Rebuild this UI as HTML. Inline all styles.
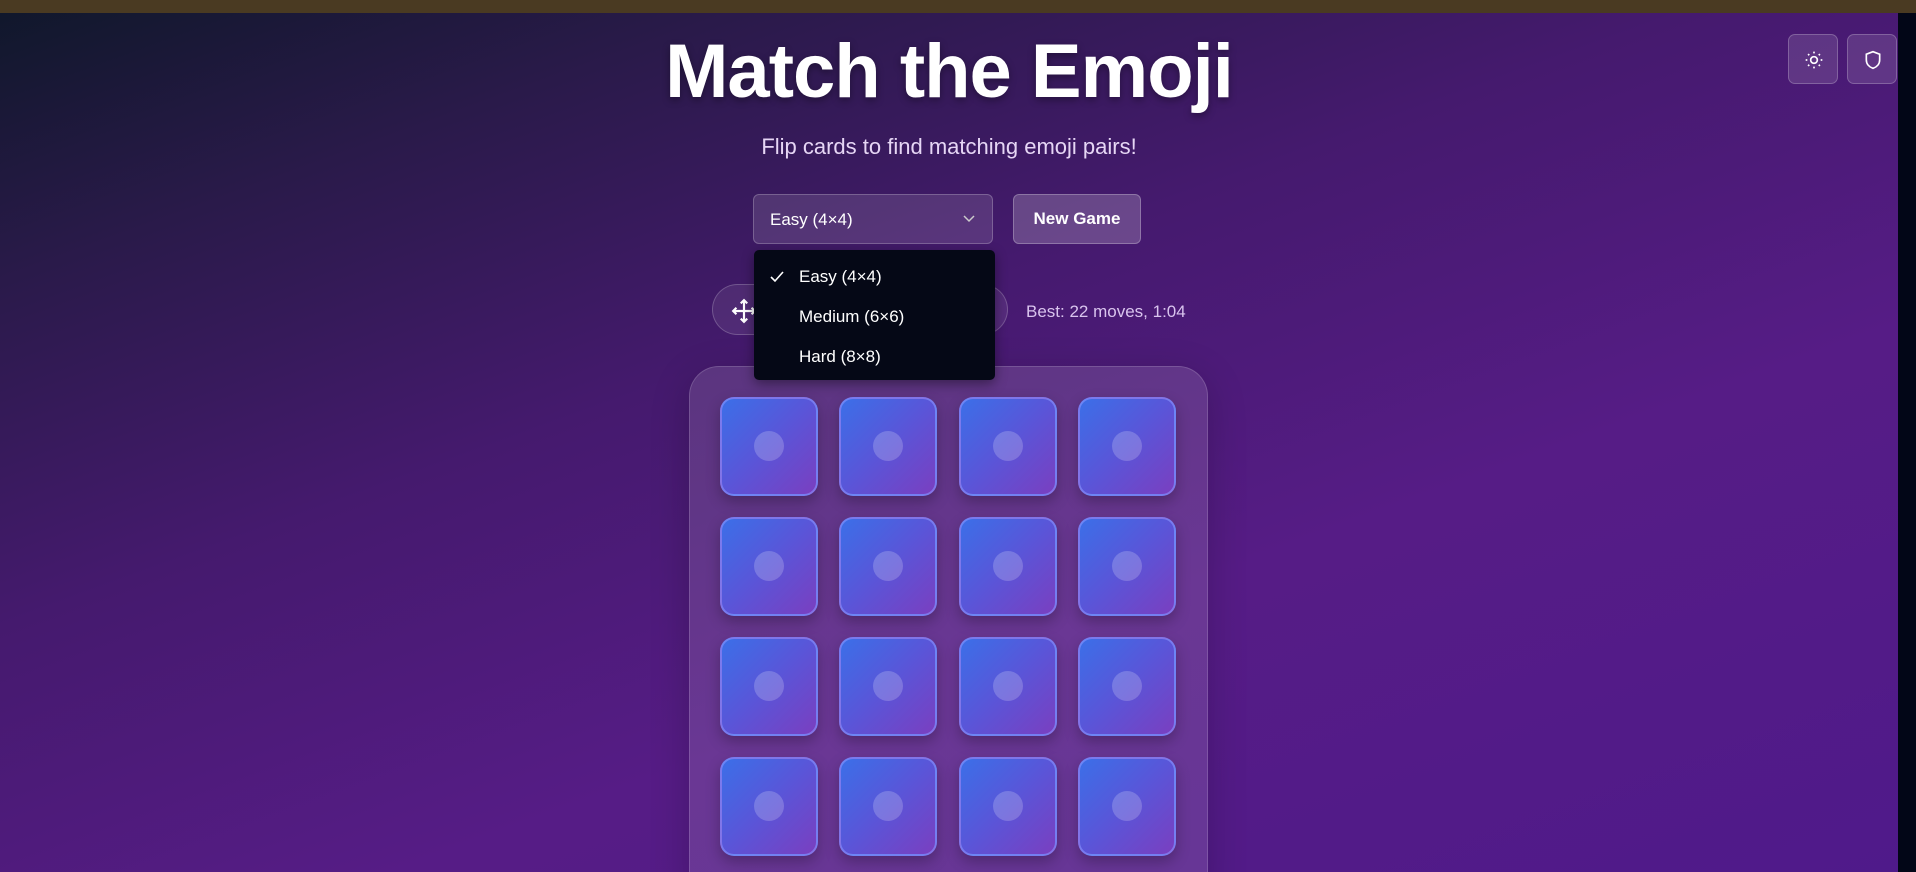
<!DOCTYPE html>
<html><head><meta charset="utf-8"><style>
*{box-sizing:border-box;margin:0;padding:0}
html,body{width:1916px;height:872px;overflow:hidden}
body{position:relative;font-family:"Liberation Sans",sans-serif;
background:linear-gradient(160deg,#0f172a 0%,#2a1a4a 18%,#451a6e 40%,#561c86 65%,#4f1a8a 100%);}
.top{position:absolute;left:0;top:0;width:1916px;height:13px;background:#4a3a22}
.strip{position:absolute;right:0;top:13px;width:18px;height:859px;background:#020617}
h1{position:absolute;left:0;width:1898px;top:28px;text-align:center;color:#fff;font-size:76px;font-weight:bold;letter-spacing:-1px;text-shadow:0 3px 8px rgba(0,0,0,.35)}
.sub{position:absolute;left:0;width:1898px;top:134px;text-align:center;color:#e6d6f5;font-size:22px}
.sel{position:absolute;left:753px;top:194px;width:240px;height:50px;border:1px solid rgba(255,255,255,.22);border-radius:6px;background:rgba(255,255,255,.12);color:#fff;font-size:17px;padding:15px 0 0 16px}
.sel svg{position:absolute;right:16px;top:19px}
.btn{position:absolute;left:1013px;top:194px;width:128px;height:50px;border:1px solid rgba(255,255,255,.25);border-radius:6px;background:rgba(255,255,255,.2);color:#fff;font-weight:bold;font-size:17px;text-align:center;line-height:48px}
.pill{position:absolute;left:712px;top:284px;width:296px;height:51px;border:1px solid rgba(255,255,255,.2);border-radius:26px;background:rgba(255,255,255,.08)}
.best{position:absolute;left:1026px;top:302px;color:#d9c4ee;font-size:17px}
.dd{position:absolute;left:754px;top:250px;width:241px;height:130px;background:#050816;border-radius:5px;box-shadow:0 4px 12px rgba(0,0,0,.4);z-index:5}
.dd div{position:absolute;left:45px;color:#fff;font-size:17px}
.board{position:absolute;left:689px;top:366px;width:519px;height:540px;border-radius:30px;background:rgba(255,255,255,.12);border:1px solid rgba(255,255,255,.15);box-shadow:0 10px 40px rgba(0,0,0,.2)}
.card{position:absolute;width:98px;height:99px;border-radius:14px;background:linear-gradient(135deg,#3b6fe8 0%,#5a55d8 50%,#7a3fc0 100%);border:2px solid rgba(140,150,255,.6);box-shadow:0 6px 14px rgba(0,0,0,.25)}
.card::after{content:"";position:absolute;left:32px;top:32px;width:30px;height:30px;border-radius:50%;background:rgba(255,255,255,.2)}
.ib{position:absolute;top:34px;width:50px;height:50px;border:1px solid rgba(255,255,255,.22);border-radius:7px;background:rgba(255,255,255,.12)}
.ib svg{position:absolute;left:15px;top:15px}
.wrap{position:absolute;left:0;top:0;width:1916px;height:872px;overflow:hidden}
</style></head><body><div class="wrap">
<div class="top"></div><div class="strip"></div>
<h1>Match the Emoji</h1>
<div class="sub">Flip cards to find matching emoji pairs!</div>
<div class="sel">Easy (4×4)<svg width="14" height="10" viewBox="0 0 14 10"><path d="M2 2l5 5 5-5" fill="none" stroke="#ccc" stroke-width="1.5"/></svg></div>
<div class="btn">New Game</div>
<div class="pill"><svg style="position:absolute;left:18px;top:13px" width="26" height="26" viewBox="0 0 24 24" fill="none" stroke="#fff" stroke-width="2"><path d="M12 2v20M2 12h20M9 5l3-3 3 3M9 19l3 3 3-3M5 9l-3 3 3 3M19 9l3 3-3 3"/></svg></div>
<div class="best">Best: 22 moves, 1:04</div>
<div class="board"></div>
<div class="card" style="left:720px;top:397px"></div><div class="card" style="left:839px;top:397px"></div><div class="card" style="left:959px;top:397px"></div><div class="card" style="left:1078px;top:397px"></div>
<div class="card" style="left:720px;top:517px"></div><div class="card" style="left:839px;top:517px"></div><div class="card" style="left:959px;top:517px"></div><div class="card" style="left:1078px;top:517px"></div>
<div class="card" style="left:720px;top:637px"></div><div class="card" style="left:839px;top:637px"></div><div class="card" style="left:959px;top:637px"></div><div class="card" style="left:1078px;top:637px"></div>
<div class="card" style="left:720px;top:757px"></div><div class="card" style="left:839px;top:757px"></div><div class="card" style="left:959px;top:757px"></div><div class="card" style="left:1078px;top:757px"></div>
<div class="dd">
<svg style="position:absolute;left:16px;top:21px" width="14" height="12" viewBox="0 0 14 12"><path d="M1 6l4 4 8-9" fill="none" stroke="#fff" stroke-width="1.6"/></svg>
<div style="top:17px">Easy (4×4)</div><div style="top:57px">Medium (6×6)</div><div style="top:97px">Hard (8×8)</div></div>
<div class="ib" style="left:1788px"><svg width="20" height="20" viewBox="0 0 24 24" fill="none" stroke="#fff" stroke-width="2"><circle cx="12" cy="12" r="4"/><path d="M12 2v2M12 20v2M4.9 4.9l1.4 1.4M17.7 17.7l1.4 1.4M2 12h2M20 12h2M4.9 19.1l1.4-1.4M17.7 6.3l1.4-1.4"/></svg></div>
<div class="ib" style="left:1847px"><svg width="20" height="20" viewBox="0 0 24 24" fill="none" stroke="#fff" stroke-width="2"><path d="M12 2l8 3v7c0 5-3.5 8.5-8 10-4.5-1.5-8-5-8-10V5z"/></svg></div>
</div></body></html>
